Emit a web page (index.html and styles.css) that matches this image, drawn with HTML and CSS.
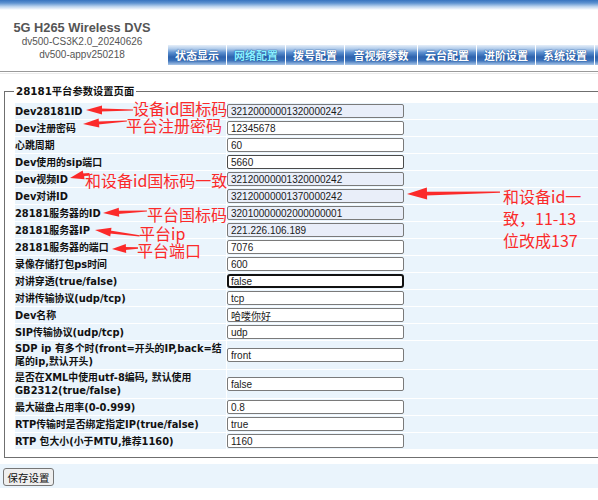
FILE: index.html
```html
<!DOCTYPE html>
<html lang="zh-CN">
<head>
<meta charset="utf-8">
<title>28181平台参数设置页面</title>
<link rel="stylesheet" href="styles.css">
</head>
<body>
<div class="page">
  <div class="topbar"></div>
  <div class="header">
    <div class="brand">
      <div class="title">5G H265 Wireless DVS</div>
      <div class="ver">dv500-CS3K2.0_20240626</div>
      <div class="ver">dv500-appv250218</div>
    </div>
    <nav class="tabs">
      <a class="tab">状态显示</a>
      <a class="tab active">网络配置</a>
      <a class="tab">拨号配置</a>
      <a class="tab wide">音视频参数</a>
      <a class="tab">云台配置</a>
      <a class="tab">进阶设置</a>
      <a class="tab">系统设置</a>
      <a class="tab"></a>
    </nav>
  </div>
  <div class="rule"></div>

  <fieldset class="group">
    <legend>28181平台参数设置页面</legend>
    <table class="params">
      <tr><td class="label">Dev28181ID</td><td class="value"><input class="ro" value="32120000001320000242"></td></tr>
      <tr><td class="label">Dev注册密码</td><td class="value"><input value="12345678"></td></tr>
      <tr><td class="label">心跳周期</td><td class="value"><input value="60"></td></tr>
      <tr><td class="label">Dev使用的sip端口</td><td class="value"><input class="hover" value="5660"></td></tr>
      <tr><td class="label">Dev视频ID</td><td class="value"><input class="ro" value="32120000001320000242"></td></tr>
      <tr><td class="label">Dev对讲ID</td><td class="value"><input class="ro" value="32120000001370000242"></td></tr>
      <tr><td class="label">28181服务器的ID</td><td class="value"><input class="ro" value="32010000002000000001"></td></tr>
      <tr><td class="label">28181服务器IP</td><td class="value"><input class="ro" value="221.226.106.189"></td></tr>
      <tr><td class="label">28181服务器的端口</td><td class="value"><input value="7076"></td></tr>
      <tr><td class="label">录像存储打包ps时间</td><td class="value"><input value="600"></td></tr>
      <tr><td class="label">对讲穿透(true/false)</td><td class="value"><input class="focus" value="false"></td></tr>
      <tr><td class="label">对讲传输协议(udp/tcp)</td><td class="value"><input value="tcp"></td></tr>
      <tr><td class="label">Dev名称</td><td class="value"><input value="哈喽你好"></td></tr>
      <tr><td class="label">SIP传输协议(udp/tcp)</td><td class="value"><input value="udp"></td></tr>
      <tr><td class="label">SDP ip 有多个时(front=开头的IP,back=结尾的ip,默认开头)</td><td class="value"><input value="front"></td></tr>
      <tr><td class="label">是否在XML中使用utf-8编码, 默认使用GB2312(true/false)</td><td class="value"><input value="false"></td></tr>
      <tr><td class="label">最大磁盘占用率(0-0.999)</td><td class="value"><input value="0.8"></td></tr>
      <tr><td class="label">RTP传输时是否绑定指定IP(true/false)</td><td class="value"><input value="true"></td></tr>
      <tr><td class="label">RTP 包大小(小于MTU,推荐1160)</td><td class="value"><input value="1160"></td></tr>
    </table>
  </fieldset>

  <div class="actions"><button class="save" type="button">保存设置</button></div>

  <svg class="marks" width="598" height="500" viewBox="0 0 598 500" aria-hidden="true">
    <g fill="#fb2a2a">
      <g transform="translate(86 110)"><polygon points="0,0 16,-4.5 16,4.5"/><polygon points="15,-1.6 47,-0.6 47,0.6 15,1.6"/></g>
      <g transform="translate(83 124) rotate(-3.9)"><polygon points="0,0 16,-4.5 16,4.5"/><polygon points="15,-1.6 44,-0.6 44,0.6 15,1.6"/></g>
      <g transform="translate(70 178) rotate(-12.5)"><polygon points="0,0 14,-4.5 14,4.5"/><polygon points="13,-1.6 20,-0.8 20,0.8 13,1.6"/></g>
      <g transform="translate(103 213) rotate(-2.6)"><polygon points="0,0 16,-4.5 16,4.5"/><polygon points="15,-1.6 44,-0.6 44,0.6 15,1.6"/></g>
      <g transform="translate(95 230) rotate(7.6)"><polygon points="0,0 16,-4.5 16,4.5"/><polygon points="15,-1.6 45,-0.6 45,0.6 15,1.6"/></g>
      <g transform="translate(112 249) rotate(-2.2)"><polygon points="0,0 14,-4.5 14,4.5"/><polygon points="13,-1.6 26,-0.8 26,0.8 13,1.6"/></g>
      <g transform="translate(407 194) rotate(-1.2)"><polygon points="0,0 20,-6 20,6"/><polygon points="19,-1.8 93,-0.6 93,0.6 19,1.8"/></g>
    </g>
  </svg>
  <div class="note n1">设备id国标码</div>
  <div class="note n2">平台注册密码</div>
  <div class="note n3">和设备id国标码一致</div>
  <div class="note n4">平台国标码</div>
  <div class="note n5">平台ip</div>
  <div class="note n6">平台端口</div>
  <div class="note n7">和设备id一<br>致，11-13<br>位改成137</div>
</div>
</body>
</html>
```
FILE: styles.css
```css
html, body {
  margin: 0;
  padding: 0;
  overflow: hidden;
  background: #fff;
}
.page {
  position: relative;
  width: 598px;
  height: 500px;
  overflow: hidden;
  font-family: "DejaVu Sans", "Noto Sans CJK SC", sans-serif;
}
.topbar {
  height: 10px;
  background: linear-gradient(#3673bf 0%, #5d92d0 30%, #b9d2ee 65%, #ffffff 100%);
}
.header {
  display: flex;
  height: 61px;
  overflow: hidden;
}
.brand {
  flex: 0 0 164px;
  text-align: center;
  padding-top: 11px;
  color: #555;
}
.title {
  font-family: "Liberation Sans", "Noto Sans CJK SC", sans-serif;
  font-weight: bold;
  font-size: 12.8px;
  line-height: 14px;
}
.ver {
  font-family: "Liberation Sans", "Noto Sans CJK SC", sans-serif;
  font-size: 10px;
  line-height: 13px;
}
.tabs {
  display: flex;
  gap: 1px;
  margin: 35px 0 0 4px;
  flex-shrink: 0;
  height: 20px;
}
.tab {
  flex: 0 0 58px;
  height: 20px;
  display: flex;
  align-items: center;
  justify-content: center;
  font-family: "Noto Sans CJK SC", sans-serif;
  font-weight: bold;
  font-size: 11px;
  color: #fff;
  text-shadow: 0 0 1px #1d4f97, 0 0 1px #1d4f97;
  background: linear-gradient(#e6eff9 0%, #b3cdeb 18%, #5b8fcf 38%, #2d63ae 60%, #3c72ba 78%, #a9c6e8 100%);
}
.tab.wide { flex-basis: 72px; }
.tab.active { color: #8af0ff; }
.rule {
  border-top: 1px solid #9a9a9a;
  border-bottom: 1px solid #ececec;
  height: 1px;
}
.group {
  margin: 11px 0 0 4px;
  width: 700px;
  padding: 5px 9px 7px 9px;
  border: 1px solid #6f6f6f;
  min-width: 0;
}
.group legend {
  padding: 0 2px;
  font-weight: bold;
  font-size: 10.3px;
  line-height: 12px;
  color: #111;
}
.params {
  border-collapse: separate;
  border-spacing: 1px;
  width: 100%;
}
.params td {
  background: #eaf4fc;
  padding: 1px;
  vertical-align: middle;
}
.params td.label {
  width: 210px;
  padding-left: 0;
  font-weight: bold;
  font-size: 9.9px;
  line-height: 13px;
  color: #111;
}
.params td.value {
  padding-left: 0;
}
.params input {
  display: block;
  box-sizing: border-box;
  width: 177px;
  height: 14px;
  margin: 0;
  padding: 0 3px;
  border: 1px solid #7a7a7a;
  border-radius: 2px;
  background: #fff;
  font-family: "Liberation Sans", "Noto Sans CJK SC", sans-serif;
  font-size: 10px;
  color: #1a1a1a;
  outline: none;
}
.params input.ro { background: #e9eef9; }
.params input.hover { border-color: #4a4a4a; }
.params input.focus { border: 2px solid #111; border-radius: 3px; padding-left: 2px; }
.actions {
  margin-top: 6px;
  height: 24px;
  background: #eaf4fc;
  padding: 4px 3px 0;
  box-sizing: border-box;
}
.save {
  display: block;
  width: 51px;
  height: 18px;
  padding: 0;
  font-family: "Noto Sans CJK SC", sans-serif;
  font-size: 10.5px;
  color: #111;
  background: #efefef;
  border: 1px solid #767676;
  border-radius: 3px;
}
.marks {
  position: absolute;
  left: 0;
  top: 0;
  pointer-events: none;
}
.note {
  position: absolute;
  font-family: "Noto Sans CJK SC", sans-serif;
  font-size: 16px;
  line-height: 16px;
  color: #fb2a2a;
  white-space: nowrap;
}
.n1 { left: 133px; top: 100px; }
.n2 { left: 126px; top: 117px; }
.n3 { left: 85px; top: 172px; }
.n4 { left: 147px; top: 206px; }
.n5 { left: 139px; top: 225px; }
.n6 { left: 137px; top: 242px; }
.n7 { left: 503px; top: 185px; line-height: 22px; }
```
